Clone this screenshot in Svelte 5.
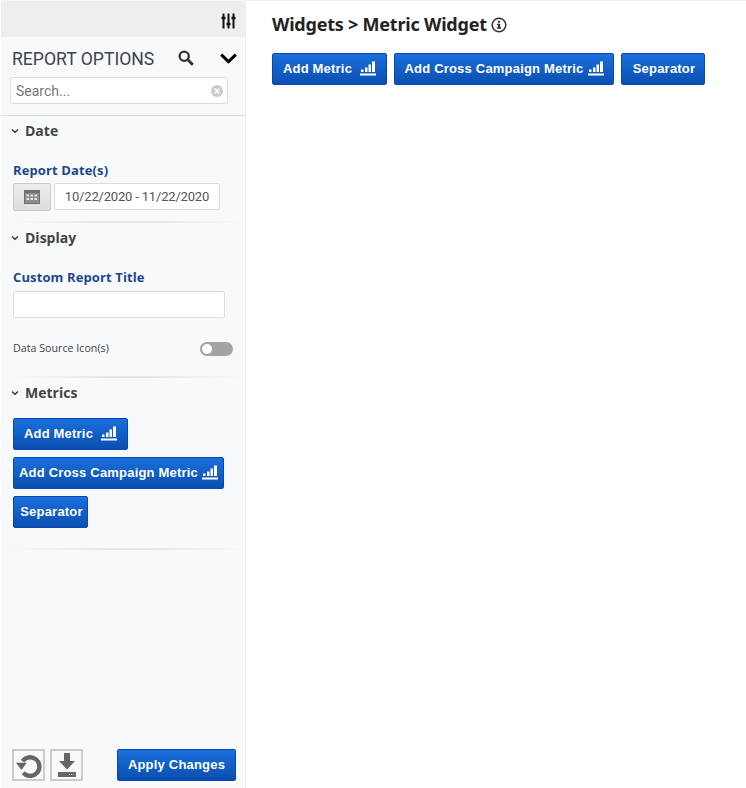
<script>
  const metricButtons = [
    { label: 'Add Metric', icon: true, cls: 'wide' },
    { label: 'Add Cross Campaign Metric', icon: true, cls: 'cross' },
    { label: 'Separator', icon: false, cls: 'sep' }
  ];
</script>

{#snippet bars()}
  <svg class="bars" width="16" height="15" viewBox="0 0 16 15">
    <rect x="1" y="8.5" width="2.5" height="2.5" fill="#fff" />
    <rect x="5" y="6.5" width="2.5" height="4.5" fill="#fff" />
    <rect x="8.5" y="3.5" width="2.5" height="7.5" fill="#fff" />
    <rect x="12" y="0.5" width="3" height="10.5" fill="#fff" />
    <rect x="0" y="12.5" width="16" height="2" fill="#fff" />
  </svg>
{/snippet}

{#snippet chevron()}
  <svg class="chev" width="8" height="6" viewBox="0 0 8 6">
    <path d="M1 1.5 L4 4.2 L7 1.5" fill="none" stroke="#333" stroke-width="1.4" />
  </svg>
{/snippet}

{#snippet buttons()}
  {#each metricButtons as b}
    <button class="btn {b.cls}">
      <span>{b.label}</span>
      {#if b.icon}{@render bars()}{/if}
    </button>
  {/each}
{/snippet}

<div class="page">
  <aside class="side">
    <div class="strip">
      <svg width="15" height="16" viewBox="0 0 15 16">
        <g stroke="#111" fill="none">
          <path d="M2.5 0.5 V15.5 M7.5 0.5 V15.5 M12.5 0.5 V15.5" stroke-width="2" />
          <path d="M0.5 5 H4.5 M5.5 11 H9.5 M10.5 5 H14.5" stroke-width="2.6" />
        </g>
      </svg>
    </div>

    <div class="opts-head">
      <span class="opts-title">REPORT OPTIONS</span>
      <svg class="mag" width="16" height="16" viewBox="0 0 16 16">
        <circle cx="6.2" cy="6.2" r="4.6" fill="none" stroke="#333" stroke-width="2.3" />
        <path d="M9.6 9.6 L14.8 14.8" stroke="#333" stroke-width="2.8" />
      </svg>
      <svg class="down" width="17" height="11" viewBox="0 0 17 11">
        <path d="M1.2 1.6 L8.5 8.6 L15.8 1.6" fill="none" stroke="#000" stroke-width="3" />
      </svg>
    </div>

    <div class="search">
      <span>Search...</span>
      <svg width="12" height="12" viewBox="0 0 12 12">
        <circle cx="6" cy="6" r="6" fill="#ccc" />
        <path d="M3.8 3.8 L8.2 8.2 M8.2 3.8 L3.8 8.2" stroke="#fff" stroke-width="1.6" />
      </svg>
    </div>

    <section class="group first">
      <h3>{@render chevron()}Date</h3>
      <div class="label date-label">Report Date(s)</div>
      <div class="date-row">
        <div class="cal">
          <svg width="16" height="14" viewBox="0 0 16 14">
            <rect x="0" y="0" width="16" height="14" fill="#6e6e6e" />
            <rect x="1" y="3" width="14" height="10" fill="#8c8c8c" />
            <g fill="#e4e4e4">
              <rect x="2.5" y="4.5" width="2.5" height="2" />
              <rect x="6.5" y="4.5" width="2.5" height="2" />
              <rect x="10.5" y="4.5" width="2.5" height="2" />
              <rect x="2.5" y="8" width="2.5" height="2" />
              <rect x="6.5" y="8" width="2.5" height="2" />
              <rect x="10.5" y="8" width="2.5" height="2" />
            </g>
          </svg>
        </div>
        <div class="date-input">10/22/2020 - 11/22/2020</div>
      </div>
      <div class="rule rule-date"></div>
    </section>

    <section class="group">
      <h3>{@render chevron()}Display</h3>
      <div class="label title-label">Custom Report Title</div>
      <div class="text-input"></div>
      <div class="toggle-row">
        <span>Data Source Icon(s)</span>
        <div class="toggle"><div class="knob"></div></div>
      </div>
      <div class="rule rule-display"></div>
    </section>

    <section class="group">
      <h3>{@render chevron()}Metrics</h3>
      <div class="metric-list">
        {@render buttons()}
      </div>
      <div class="rule rule-metrics"></div>
    </section>

    <div class="foot">
      <div class="tool">
        <svg width="26" height="26" viewBox="0 0 24 24">
          <path d="M6 8.5 A8.6 8.6 0 1 1 6.6 19.2" fill="none" stroke="#666" stroke-width="4" />
          <path d="M0 10 H10 L5 16.5 Z" fill="#666" />
        </svg>
      </div>
      <div class="tool">
        <svg width="20" height="25" viewBox="0 0 20 25">
          <path d="M7 0 H13 V8 H18 L10 16.5 L2 8 H7 Z" fill="#666" />
          <rect x="1" y="19" width="18" height="5" fill="#666" />
          <path d="M12 21.5 H17" stroke="#ddd" stroke-dasharray="1 1" />
        </svg>
      </div>
      <button class="btn apply">Apply Changes</button>
    </div>
  </aside>

  <main class="content">
    <h1>Widgets &gt; Metric Widget
      <svg width="16" height="16" viewBox="0 0 16 16">
        <circle cx="8" cy="8" r="6.8" fill="none" stroke="#333" stroke-width="1.5" />
        <rect x="7" y="6.8" width="2.2" height="4.6" fill="#333" />
        <rect x="5.8" y="10.4" width="4.4" height="1.3" fill="#333" />
        <rect x="5.8" y="6.8" width="2.4" height="1.1" fill="#333" />
        <rect x="7" y="3.8" width="2.2" height="1.9" fill="#333" />
      </svg>
    </h1>
    <div class="top-buttons">
      {@render buttons()}
    </div>
  </main>
</div>

<style>
  :global(body) {
    margin: 0;
    background: #fff;
  }
  .page {
    display: flex;
    height: 788px;
    overflow: hidden;
    font-family: "Open Sans", sans-serif;
  }
  .side {
    width: 244px;
    margin-left: 1px;
    border-right: 1px solid #eee;
    background: #f8f9fb;
    display: flex;
    flex-direction: column;
    flex-shrink: 0;
  }
  .strip {
    height: 36px;
    margin-top: 1px;
    background: #eeeeee;
    display: flex;
    justify-content: flex-end;
    align-items: center;
    padding-right: 9px;
    box-sizing: border-box;
    padding-top: 4px;
  }
  .opts-head {
    display: flex;
    align-items: center;
    height: 40px;
    padding: 2px 0 0 11px;
    box-sizing: border-box;
  }
  .opts-title {
    font: 400 17.6px Roboto, sans-serif;
    color: #3c4450;
    width: 166px;
    padding-top: 1px;
  }
  .down {
    margin-left: 26px;
  }
  .search {
    margin-left: 9px;
    width: 218px;
    height: 27px;
    box-sizing: border-box;
    background: #fff;
    border: 1px solid #ddd;
    border-radius: 2px;
    display: flex;
    align-items: center;
    justify-content: space-between;
    padding: 0 4px 0 5px;
    font: 400 14px Roboto, sans-serif;
    color: #777;
  }
  .group h3 {
    margin: 0;
    font: 700 14px/20px "Open Sans", sans-serif;
    color: #444;
    display: flex;
    align-items: center;
    padding-left: 10px;
  }
  .chev {
    margin-right: 6px;
  }
  .first {
    margin-top: 11px;
    border-top: 1px solid #ddd;
    padding-top: 5px;
  }
  .label {
    font: 700 13px/18px "Open Sans", sans-serif;
    letter-spacing: 0.12px;
    color: #1b4a8c;
    padding-left: 12px;
  }
  .date-label {
    margin-top: 20px;
  }
  .title-label {
    margin-top: 20px;
  }
  .date-row {
    display: flex;
    gap: 3px;
    margin: 4px 0 0 12px;
  }
  .cal {
    width: 38px;
    height: 28px;
    box-sizing: border-box;
    border: 1px solid #ccc;
    border-radius: 2px;
    background: linear-gradient(#eee, #ddd);
    display: flex;
    align-items: center;
    justify-content: center;
  }
  .date-input {
    width: 166px;
    height: 27px;
    box-sizing: border-box;
    border: 1px solid #ddd;
    background: #fff;
    border-radius: 2px;
    font: 400 13px/25px Roboto, sans-serif;
    letter-spacing: -0.18px;
    color: #555;
    text-align: center;
  }
  .rule {
    height: 2px;
    margin: 0 0 0 11px;
    background: linear-gradient(90deg, #f8f9fb, #e6e6e6 40%, #e6e6e6 60%, #f8f9fb);
  }
  .rule-date {
    margin-top: 10px;
    margin-bottom: 5px;
  }
  .text-input {
    margin: 5px 0 0 12px;
    width: 212px;
    height: 27px;
    box-sizing: border-box;
    background: #fff;
    border: 1px solid #ddd;
    border-radius: 2px;
  }
  .toggle-row {
    display: flex;
    justify-content: space-between;
    align-items: center;
    margin: 23px 12px 0 12px;
    font: 400 10.7px/14px "Open Sans", sans-serif;
    color: #444;
  }
  .toggle {
    width: 33px;
    height: 14px;
    border-radius: 7px;
    background: #a3a3a3;
    position: relative;
    top: 1px;
  }
  .knob {
    position: absolute;
    left: 2px;
    top: 2px;
    width: 10px;
    height: 10px;
    border-radius: 50%;
    background: #fff;
  }
  .rule-display {
    margin-top: 21px;
    margin-bottom: 5px;
  }
  .metric-list {
    display: flex;
    flex-direction: column;
    align-items: flex-start;
    gap: 7px;
    margin: 15px 0 0 12px;
  }
  .rule-metrics {
    margin-top: 20px;
  }
  .btn {
    display: inline-flex;
    align-items: center;
    justify-content: center;
    gap: 8px;
    height: 32px;
    box-sizing: border-box;
    border: 1px solid #0b47b0;
    border-radius: 2px;
    background: linear-gradient(#1b6fdc, #0a4fb0);
    color: #fff;
    font: 700 13px "Liberation Sans", Arial, sans-serif;
    letter-spacing: 0.2px;
    padding: 0 0 2px;
    white-space: nowrap;
  }
  .wide {
    width: 115px;
  }
  .cross {
    width: 211px;
    gap: 4px;
    letter-spacing: 0.2px;
  }
  .sep {
    width: 75px;
    padding-left: 2px;
  }
  .bars {
    flex-shrink: 0;
  }
  .foot {
    margin-top: auto;
    display: flex;
    align-items: flex-end;
    padding: 0 0 7px 11px;
  }
  .tool {
    width: 33px;
    height: 32px;
    box-sizing: border-box;
    border: 2px solid #ccc;
    display: flex;
    align-items: center;
    justify-content: center;
    margin-right: 5px;
  }
  .apply {
    width: 119px;
    margin-left: 29px;
  }
  .content {
    flex: 1;
    border-top: 1px solid #eee;
    padding: 0 0 0 26px;
  }
  h1 {
    margin: 11px 0 0 0;
    font: 700 18px/25px "Noto Sans", sans-serif;
    letter-spacing: -0.22px;
    color: #222;
    display: flex;
    align-items: center;
    gap: 4px;
  }
  .top-buttons {
    display: flex;
    gap: 7px;
    margin-top: 16px;
  }
  .top-buttons .cross {
    width: 220px;
    gap: 4px;
  }
  .top-buttons .sep {
    width: 84px;
  }
</style>
